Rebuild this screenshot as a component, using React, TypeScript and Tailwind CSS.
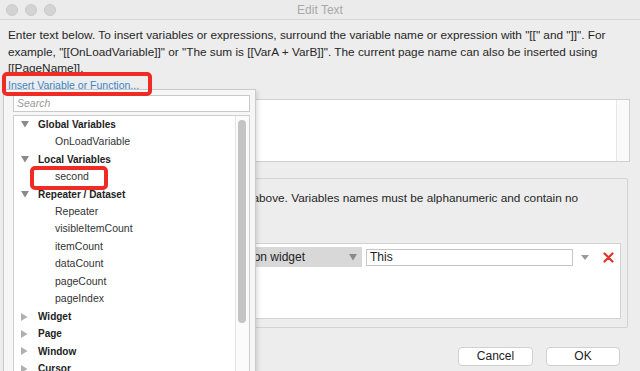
import React from "react";

const Down = ({ light }: { light?: boolean }) => (
  <svg width="8" height="7" viewBox="0 0 8 7" className="shrink-0">
    <polygon points="0,0 8,0 4,6.5" fill={light ? "#aaaaaa" : "#8a8a8a"} />
  </svg>
);
const Right = () => (
  <svg width="7" height="8" viewBox="0 0 7 8" className="shrink-0">
    <polygon points="0,0 6.5,4 0,8" fill="#b0b0b0" />
  </svg>
);

type Row = { label: string; kind: "open" | "closed" | "child" };
const rows: Row[] = [
  { label: "Global Variables", kind: "open" },
  { label: "OnLoadVariable", kind: "child" },
  { label: "Local Variables", kind: "open" },
  { label: "second", kind: "child" },
  { label: "Repeater / Dataset", kind: "open" },
  { label: "Repeater", kind: "child" },
  { label: "visibleItemCount", kind: "child" },
  { label: "itemCount", kind: "child" },
  { label: "dataCount", kind: "child" },
  { label: "pageCount", kind: "child" },
  { label: "pageIndex", kind: "child" },
  { label: "Widget", kind: "closed" },
  { label: "Page", kind: "closed" },
  { label: "Window", kind: "closed" },
  { label: "Cursor", kind: "closed" },
];

export default function App() {
  return (
    <div
      className="relative w-[640px] h-[371px] overflow-hidden bg-[#ededed] text-[#222]"
      style={{ fontFamily: '"Liberation Sans", Arial, sans-serif' }}
    >
      {/* Title bar */}
      <div className="grid grid-cols-[1fr_auto_1fr] items-center h-[20px] bg-[#ebebeb] border-b border-[#d6d6d6]">
        <div className="flex items-center gap-[7px] pl-[6px]">
          <span className="w-[12px] h-[12px] rounded-full bg-[#d3d3d3] border border-[#c9c9c9]" />
          <span className="w-[12px] h-[12px] rounded-full bg-[#d3d3d3] border border-[#c9c9c9]" />
          <span className="w-[12px] h-[12px] rounded-full bg-[#d3d3d3] border border-[#c9c9c9]" />
        </div>
        <div className="text-[12px] text-[#a9a9a9]">Edit Text</div>
        <div />
      </div>

      {/* Body */}
      <div className="flex flex-col px-[8px]">
        <p className="pt-[7px] text-[11.8px] leading-[16.5px] text-[#262626]">
          Enter text below. To insert variables or expressions, surround the variable name or expression with "[[" and "]]". For
          example, "[[OnLoadVariable]]" or "The sum is [[VarA + VarB]]". The current page name can also be inserted using
          [[PageName]].
        </p>
        <div className="mt-[1.5px] h-[14px] text-[10.5px] leading-[14px] text-[#3b86c6]">Insert Variable or Function...</div>

        {/* text area */}
        <div className="mt-[7px] mr-[2px] h-[63px] flex bg-white border border-[#cfcfcf]">
          <div className="flex-1" />
          <div className="w-[13px] border-l border-[#e6e6e6] bg-[#fafafa]" />
        </div>

        {/* group box */}
        <div className="mt-[16px] mr-[4px] h-[150px] flex flex-col border border-[#d2d2d2] rounded-[2px] pt-[11px] pr-[6px]">
          <p className="pl-[10px] text-[11.8px] leading-[16.5px] text-[#262626] whitespace-nowrap">
            Create local variables here to use in the text above. Variables names must be alphanumeric and contain no
            <br />
            spaces.
          </p>
          <div className="mt-[20px] ml-[6px] h-[76px] bg-white border border-[#d2d2d2] pt-[3px] pl-[4px]">
            <div className="flex items-center h-[20px]">
              <div className="w-[170px] h-[17px] border border-[#c8c8c8] text-[12px] leading-[15px] px-[3px]">second</div>
              <span className="w-[30px] text-center text-[12px]">=</span>
              <div className="w-[142px] h-[20px] flex items-center justify-between bg-[#d8d8d8] pl-[11px] pr-[5px] text-[12px]">
                <span>text on widget</span>
                <Down />
              </div>
              <div className="ml-[4px] w-[207px] h-[17px] border border-[#c6c6c6] bg-white text-[12px] leading-[15px] pl-[3px]">
                This
              </div>
              <div className="ml-[8px] w-[8px] flex items-center">
                <svg width="8" height="5" viewBox="0 0 8 5">
                  <polygon points="0,0 8,0 4,5" fill="#9a9a9a" />
                </svg>
              </div>
              <div className="ml-[14px] flex items-center">
                <svg width="11" height="11" viewBox="0 0 11 11">
                  <path d="M1.5 1.5 L9.5 9.5 M9.5 1.5 L1.5 9.5" stroke="#e3332c" strokeWidth="2.2" strokeLinecap="round" />
                </svg>
              </div>
            </div>
          </div>
        </div>

        {/* buttons */}
        <div className="mt-[19px] flex justify-end gap-[13px] pr-[12px]">
          <button className="w-[75px] h-[19px] bg-white border border-[#d0d0d0] rounded-[4px] text-[12px] leading-[17px] text-[#222]">
            Cancel
          </button>
          <button className="w-[74px] h-[19px] bg-white border border-[#d0d0d0] rounded-[4px] text-[12px] leading-[17px] text-[#222]">
            OK
          </button>
        </div>
      </div>

      {/* Dropdown overlay */}
      <div className="absolute left-[3px] top-[89px] w-[253px] h-[290px] bg-[#f6f6f6] border border-[#cbcbcb] shadow-[2px_2px_4px_rgba(0,0,0,0.12)] pl-[9px] pr-[5px] pt-[5px] flex flex-col">
        <div className="h-[17px] bg-white border border-[#c9c9c9] text-[10.5px] italic text-[#9a9a9a] leading-[15px] pl-[3px]">
          Search
        </div>
        <div className="mt-[3px] flex-1 flex bg-white border border-[#cfcfcf]">
          <div className="flex-1 flex flex-col">
            {rows.map((r) => (
              <div key={r.label} className="h-[17.45px] flex items-center shrink-0">
                {r.kind === "child" ? (
                  <span className="pl-[41px] text-[10.5px] text-[#333]">{r.label}</span>
                ) : (
                  <>
                    <span className="pl-[7px] w-[24px] flex">
                      {r.kind === "open" ? <Down /> : <Right />}
                    </span>
                    <span className="text-[10px] font-bold text-[#222]">{r.label}</span>
                  </>
                )}
              </div>
            ))}
          </div>
          <div className="w-[14px] border-l border-[#e4e4e4] bg-[#fbfbfb] pt-[4px] pl-[2px]">
            <div className="w-[8px] h-[203px] rounded-full bg-[#c4c4c4]" />
          </div>
        </div>
      </div>

      {/* Red annotation boxes */}
      <div className="absolute left-[2px] top-[72px] w-[150px] h-[24px] border-[4px] border-[#ee2b24] rounded-[5px]" />
      <div className="absolute left-[30px] top-[166px] w-[78px] h-[24px] border-[4px] border-[#ee2b24] rounded-[5px]" />
    </div>
  );
}
